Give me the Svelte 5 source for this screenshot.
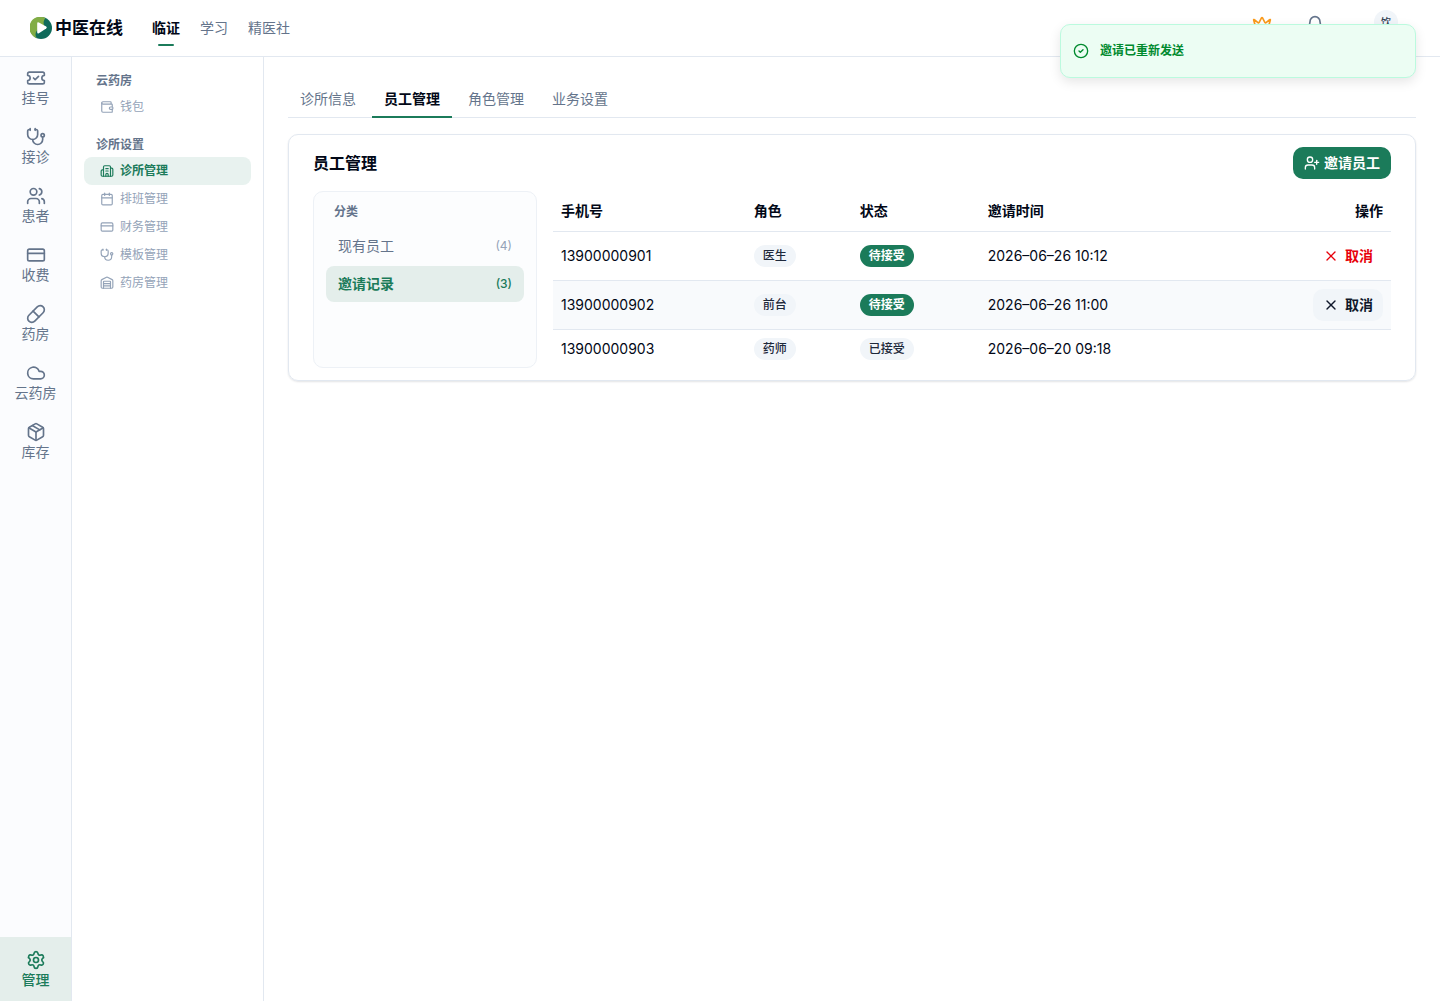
<script>
  const rail = [
    { label: '挂号', icon: 'ticket' },
    { label: '接诊', icon: 'stethoscope' },
    { label: '患者', icon: 'users' },
    { label: '收费', icon: 'card' },
    { label: '药房', icon: 'pill' },
    { label: '云药房', icon: 'cloud' },
    { label: '库存', icon: 'package' }
  ];
  const clinicLinks = [
    { label: '诊所管理', icon: 'hospital', active: true },
    { label: '排班管理', icon: 'calendar' },
    { label: '财务管理', icon: 'card' },
    { label: '模板管理', icon: 'stethoscope' },
    { label: '药房管理', icon: 'warehouse' }
  ];
  const tabs = ['诊所信息', '员工管理', '角色管理', '业务设置'];
  const invites = [
    { phone: '13900000901', role: '医生', status: '待接受', time: '2026–06–26 10:12', pending: true },
    { phone: '13900000902', role: '前台', status: '待接受', time: '2026–06–26 11:00', pending: true, hovered: true },
    { phone: '13900000903', role: '药师', status: '已接受', time: '2026–06–20 09:18' }
  ];
  const icons = {
    ticket: ['M2 9a3 3 0 0 1 0 6v2a2 2 0 0 0 2 2h16a2 2 0 0 0 2-2v-2a3 3 0 0 1 0-6V7a2 2 0 0 0-2-2H4a2 2 0 0 0-2 2Z', 'm9 12 2 2 4-4'],
    stethoscope: ['M11 2v2', 'M5 2v2', 'M5 3H4a2 2 0 0 0-2 2v4a6 6 0 0 0 12 0V5a2 2 0 0 0-2-2h-1', 'M8 15a6 6 0 0 0 12 0v-3', 'M18 10a2 2 0 1 0 4 0a2 2 0 1 0-4 0'],
    users: ['M16 21v-2a4 4 0 0 0-4-4H6a4 4 0 0 0-4 4v2', 'M16 3.128a4 4 0 0 1 0 7.744', 'M22 21v-2a4 4 0 0 0-3-3.87', 'M5 7a4 4 0 1 0 8 0a4 4 0 1 0-8 0'],
    card: ['M4 5h16a2 2 0 0 1 2 2v10a2 2 0 0 1-2 2H4a2 2 0 0 1-2-2V7a2 2 0 0 1 2-2z', 'M2 10h20'],
    pill: ['m10.5 20.5 10-10a4.95 4.95 0 1 0-7-7l-10 10a4.95 4.95 0 1 0 7 7Z', 'm8.5 8.5 7 7'],
    cloud: ['M17.5 19H9a7 7 0 1 1 6.71-9h1.79a4.5 4.5 0 1 1 0 9Z'],
    package: ['M11 21.73a2 2 0 0 0 2 0l7-4A2 2 0 0 0 21 16V8a2 2 0 0 0-1-1.73l-7-4a2 2 0 0 0-2 0l-7 4A2 2 0 0 0 3 8v8a2 2 0 0 0 1 1.73z', 'M12 22V12', 'M3.29 7 12 12l8.71-5', 'm7.5 4.27 9 5.15'],
    settings: ['M9.671 4.136a2.34 2.34 0 0 1 4.659 0 2.34 2.34 0 0 0 3.319 1.915 2.34 2.34 0 0 1 2.33 4.033 2.34 2.34 0 0 0 0 3.831 2.34 2.34 0 0 1-2.33 4.033 2.34 2.34 0 0 0-3.319 1.915 2.34 2.34 0 0 1-4.659 0 2.34 2.34 0 0 0-3.32-1.915 2.34 2.34 0 0 1-2.33-4.033 2.34 2.34 0 0 0 0-3.831A2.34 2.34 0 0 1 6.35 6.051a2.34 2.34 0 0 0 3.319-1.915', 'M9 12a3 3 0 1 0 6 0a3 3 0 1 0-6 0'],
    wallet: ['M19 7V4a1 1 0 0 0-1-1H5a2 2 0 0 0 0 4h15a1 1 0 0 1 1 1v4h-3a2 2 0 0 0 0 4h3a1 1 0 0 0 1-1v-2a1 1 0 0 0-1-1', 'M3 5v14a2 2 0 0 0 2 2h15a1 1 0 0 0 1-1v-4'],
    hospital: ['M10 12h4', 'M10 8h4', 'M14 21v-3a2 2 0 0 0-4 0v3', 'M6 10H4a2 2 0 0 0-2 2v7a2 2 0 0 0 2 2h16a2 2 0 0 0 2-2V9a2 2 0 0 0-2-2h-2', 'M6 21V5a2 2 0 0 1 2-2h8a2 2 0 0 1 2 2v16'],
    calendar: ['M8 2v4', 'M16 2v4', 'M5 4h14a2 2 0 0 1 2 2v14a2 2 0 0 1-2 2H5a2 2 0 0 1-2-2V6a2 2 0 0 1 2-2z', 'M3 10h18'],
    warehouse: ['M18 21V10a1 1 0 0 0-1-1H7a1 1 0 0 0-1 1v11', 'M22 19a2 2 0 0 1-2 2H4a2 2 0 0 1-2-2V8a2 2 0 0 1 1.132-1.803l7.95-3.974a2 2 0 0 1 1.837 0l7.948 3.974A2 2 0 0 1 22 8z', 'M6 13h12', 'M6 17h12'],
    crown: ['M11.562 3.266a.5.5 0 0 1 .876 0L15.39 8.87a1 1 0 0 0 1.516.294L21.183 5.5a.5.5 0 0 1 .798.519l-2.834 10.246a1 1 0 0 1-.956.734H5.81a1 1 0 0 1-.957-.734L2.02 6.02a.5.5 0 0 1 .798-.519l4.276 3.664a1 1 0 0 0 1.516-.294z', 'M5 21h14'],
    bell: ['M10.268 21a2 2 0 0 0 3.464 0', 'M3.262 15.326A1 1 0 0 0 4 17h16a1 1 0 0 0 .74-1.673C19.41 13.956 18 12.499 18 8A6 6 0 0 0 6 8c0 4.499-1.411 5.956-2.738 7.326'],
    userPlus: ['M16 21v-2a4 4 0 0 0-4-4H6a4 4 0 0 0-4 4v2', 'M5 7a4 4 0 1 0 8 0a4 4 0 1 0-8 0', 'M19 8v6', 'M22 11h-6'],
    close: ['M18 6 6 18', 'm6 6 12 12'],
    check: ['M2 12a10 10 0 1 0 20 0a10 10 0 1 0-20 0', 'm9 12 2 2 4-4']
  };
</script>

{#snippet icon(name, size)}
  <svg width={size} height={size} viewBox="0 0 24 24" aria-hidden="true">
    {#each icons[name] as d}<path {d} />{/each}
  </svg>
{/snippet}

<div class="app">
  <header class="topbar">
    <a class="brand" href="#home">
      <svg class="logo" width="22" height="22" viewBox="0 0 22 22" aria-hidden="true">
        <circle cx="11" cy="11" r="11" fill="#0f6b5b" />
        <path d="M15.500 1A11 11 0 1 0 7 21.200C5 19 5.500 17 6 15L9 11L14 8C13 5 14 3 15.500 1Z" fill="#82ad45" />
        <path d="M7.200 6.500Q7.200 4.700 8.900 5.500L16.200 9.500Q17.500 10.500 16.200 11.500L8.900 16.300Q7.200 17 7.200 15.200Z" fill="#fff" />
      </svg>
      <span>中医在线</span>
    </a>
    <nav class="sections">
      <a class="active" href="#clinic">临证</a>
      <a href="#study">学习</a>
      <a href="#club">精医社</a>
    </nav>
    <div class="tools">
      <button class="tool crown" aria-label="会员">{@render icon('crown', 20)}</button>
      <button class="tool bell" aria-label="通知">{@render icon('bell', 20)}</button>
      <button class="avatar">饮</button>
    </div>
  </header>

  <div class="body">
    <nav class="rail">
      {#each rail as item}
        <a href="#{item.icon}">{@render icon(item.icon, 20)}<span>{item.label}</span></a>
      {/each}
      <a class="manage" href="#manage">{@render icon('settings', 20)}<span>管理</span></a>
    </nav>

    <aside class="side">
      <section>
        <h2>云药房</h2>
        <a href="#wallet">{@render icon('wallet', 14)}<span>钱包</span></a>
      </section>
      <section>
        <h2>诊所设置</h2>
        {#each clinicLinks as link}
          <a class:active={link.active} href="#{link.icon}">{@render icon(link.icon, 14)}<span>{link.label}</span></a>
        {/each}
      </section>
    </aside>

    <main>
      <div class="tabs" role="tablist">
        {#each tabs as tab, i}
          <button role="tab" aria-selected={i === 1} class:active={i === 1}>{tab}</button>
        {/each}
      </div>

      <section class="card">
        <div class="card-head">
          <h1>员工管理</h1>
          <button class="primary">{@render icon('userPlus', 16)}<span>邀请员工</span></button>
        </div>
        <div class="card-body">
          <div class="groups">
            <h3>分类</h3>
            <button><span>现有员工</span><small>(4)</small></button>
            <button class="active"><span>邀请记录</span><small>(3)</small></button>
          </div>
          <table>
            <colgroup>
              <col class="c-phone" /><col class="c-role" /><col class="c-status" /><col class="c-time" /><col />
            </colgroup>
            <thead>
              <tr><th>手机号</th><th>角色</th><th>状态</th><th>邀请时间</th><th class="end">操作</th></tr>
            </thead>
            <tbody>
              {#each invites as row}
                <tr class:hovered={row.hovered}>
                  <td>{row.phone}</td>
                  <td><span class="badge">{row.role}</span></td>
                  <td><span class="badge" class:solid={row.pending}>{row.status}</span></td>
                  <td>{row.time}</td>
                  <td class="end">
                    {#if row.pending}
                      <button class="cancel">{@render icon('close', 16)}<span>取消</span></button>
                    {/if}
                  </td>
                </tr>
              {/each}
            </tbody>
          </table>
        </div>
      </section>
    </main>
  </div>

  <div class="toast" role="status">{@render icon('check', 16)}<span>邀请已重新发送</span></div>
</div>

<style>
  :global(body) { margin: 0; background: #fff; }
  .app {
    display: flex;
    flex-direction: column;
    min-height: 100vh;
    color: #020817;
    font: 14px/20px Inter, "Noto Sans CJK SC", sans-serif;
  }
  .app, .app * { box-sizing: border-box; }
  a { color: inherit; text-decoration: none; }
  button { font: inherit; color: inherit; border: 0; background: none; padding: 0; cursor: pointer; }
  h1, h2, h3 { margin: 0; }
  svg { flex: none; fill: none; stroke: currentColor; stroke-width: 2; stroke-linecap: round; stroke-linejoin: round; }
  .logo { stroke: none; }

  .topbar { display: flex; align-items: center; height: 57px; padding: 0 42px 0 30px; border-bottom: 1px solid #e2e8f0; }
  .brand { display: flex; align-items: center; gap: 3px; font-size: 17px; font-weight: 600; }
  .sections { display: flex; gap: 20px; margin-left: 29px; color: #64748b; }
  .sections a { position: relative; }
  .sections .active { color: #020817; font-weight: 600; }
  .sections .active::after { content: ""; position: absolute; left: 6px; right: 6px; bottom: -8px; height: 2px; border-radius: 1px; background: #1b7b5a; }
  .tools { display: flex; align-self: flex-start; margin-left: auto; padding-top: 10px; color: #64748b; }
  .tool { display: flex; padding-top: 5px; }
  .crown { color: #fa9b1c; }
  .bell { margin-left: 33px; }
  .avatar { width: 24px; height: 24px; margin-left: 49px; border-radius: 50%; background: #f1f5f9; color: #334155; font-size: 10px; font-weight: 500; }

  .body { display: flex; flex: 1; }
  .rail { display: flex; flex-direction: column; flex: none; width: 72px; padding-top: 1px; border-right: 1px solid #e2e8f0; background: #fbfcfe; color: #64748b; }
  .rail a { display: flex; flex-direction: column; align-items: center; padding: 10px 0 9px; }
  .rail .manage { margin-top: auto; padding: 13px 0 11px; background: #e4eeeb; color: #1b7b5a; font-weight: 500; }

  .side { display: flex; flex-direction: column; gap: 12px; flex: none; width: 192px; padding: 12px; border-right: 1px solid #e2e8f0; font-size: 12px; }
  .side h2 { padding: 2px 12px; color: #64748b; font-size: 12px; line-height: 20px; font-weight: 600; }
  .side a { display: flex; align-items: center; gap: 6px; height: 28px; padding: 0 16px; border-radius: 8px; color: #94a3b8; }
  .side a.active { background: #e8f2ef; color: #1b7b5a; font-weight: 600; }

  main { flex: 1; min-width: 0; padding: 24px; }
  .tabs { display: flex; gap: 4px; margin-bottom: 16px; border-bottom: 1px solid #e2e8f0; }
  .tabs button { height: 37px; margin-bottom: -1px; padding: 0 12px; border-bottom: 2px solid transparent; color: #64748b; }
  .tabs .active { border-color: #1b7b5a; color: #020817; font-weight: 600; }

  .card { padding: 12px 24px; border: 1px solid #e2e8f0; border-radius: 10px; box-shadow: 0 1px 2px rgb(15 23 42 / 12%); }
  .card-head { display: flex; align-items: center; justify-content: space-between; margin-bottom: 12px; }
  h1 { font-size: 16px; line-height: 24px; font-weight: 600; }
  .primary { display: flex; align-items: center; gap: 4px; height: 32px; padding: 0 11px; border-radius: 10px; background: #1b7b5a; color: #fff; font-weight: 600; }
  .card-body { display: flex; gap: 16px; }
  .groups { display: flex; flex-direction: column; flex: none; gap: 2px; width: 224px; padding: 12px; border: 1px solid #edf1f6; border-radius: 10px; background: #fcfdfe; }
  h3 { padding: 0 8px 6px; color: #64748b; font-size: 12px; line-height: 16px; font-weight: 600; }
  .groups button { display: flex; align-items: center; justify-content: space-between; height: 36px; padding: 0 12px; border-radius: 8px; color: #64748b; }
  .groups small { color: #94a3b8; font-size: 12px; }
  .groups .active { background: #e4eeeb; color: #1b7b5a; font-weight: 600; }
  .groups .active small { color: #1b7b5a; font-weight: 500; }

  table { flex: 1; border-collapse: collapse; table-layout: fixed; }
  .c-phone { width: 23%; }
  .c-role { width: 106px; }
  .c-status { width: 128px; }
  .c-time { width: 26%; }
  th { height: 40px; padding: 0 8px; text-align: left; font-weight: 600; }
  td { padding: 8px; }
  tr { border-bottom: 1px solid #e2e8f0; }
  tbody tr:last-child { border-bottom: 0; }
  .hovered { background: #f8fafc; }
  .end { text-align: right; }
  .badge { display: inline-flex; align-items: center; height: 22px; padding: 0 9px; border-radius: 11px; background: #f1f5f9; color: #1e293b; font-size: 12px; line-height: 16px; font-weight: 500; vertical-align: top; }
  .solid { background: #1b7b5a; color: #fff; font-weight: 600; }
  .cancel { display: inline-flex; align-items: center; gap: 6px; height: 32px; padding: 0 10px; border-radius: 10px; color: #e7000b; font-weight: 600; vertical-align: top; }
  .hovered .cancel { background: #f1f5f9; color: #0f172a; }

  .toast { position: absolute; top: 24px; right: 24px; display: flex; align-items: center; gap: 11px; width: 356px; height: 54px; padding: 0 12px; border: 1px solid #bbfade; border-radius: 10px; background: #ecfdf3; color: #008a2e; box-shadow: 0 4px 12px rgb(0 0 0 / 10%); font-size: 12px; font-weight: 600; }
</style>
